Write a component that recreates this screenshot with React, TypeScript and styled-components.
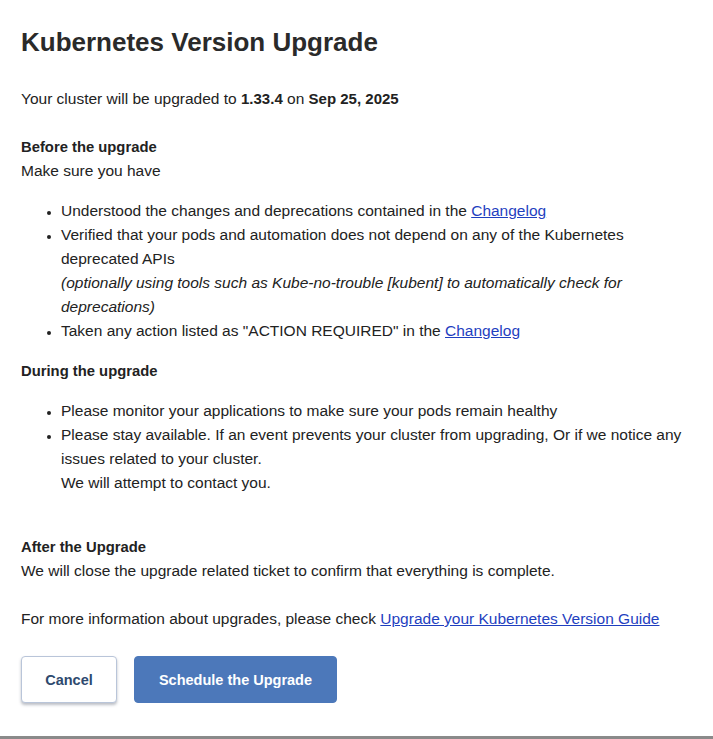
import React from 'react'
import styled, { createGlobalStyle } from 'styled-components'

const GlobalStyle = createGlobalStyle`
	html, body {
		margin: 0;
		padding: 0;
		background: #ffffff;
	}
	body {
		font-family: 'Liberation Sans', Arial, sans-serif;
		color: #222222;
	}
`

const App = () => {
	return (
		<>
			<GlobalStyle />
			<Page>
				<Title>Kubernetes Version Upgrade</Title>

				<Intro>
					Your cluster will be upgraded to <Strong>1.33.4</Strong> on <Strong>Sep 25, 2025</Strong>
				</Intro>

				<Section>
					<Heading>Before the upgrade</Heading>
					<Text>Make sure you have</Text>
					<List>
						<li>
							Understood the changes and deprecations contained in the <Link href="#">Changelog</Link>
						</li>
						<li>
							Verified that your pods and automation does not depend on any of the Kubernetes
							<br />
							deprecated APIs
							<br />
							<Note>
								(optionally using tools such as Kube-no-trouble [kubent] to automatically check for
								<br />
								deprecations)
							</Note>
						</li>
						<li>
							Taken any action listed as "ACTION REQUIRED" in the <Link href="#">Changelog</Link>
						</li>
					</List>
				</Section>

				<Section>
					<Heading>During the upgrade</Heading>
					<List>
						<li>Please monitor your applications to make sure your pods remain healthy</li>
						<li>
							Please stay available. If an event prevents your cluster from upgrading, Or if we notice any
							<br />
							issues related to your cluster.
							<br />
							We will attempt to contact you.
						</li>
					</List>
				</Section>

				<Section $top={40} $bottom={24}>
					<Heading>After the Upgrade</Heading>
					<Text>We will close the upgrade related ticket to confirm that everything is complete.</Text>
				</Section>

				<Text>
					For more information about upgrades, please check{' '}
					<Link href="#">Upgrade your Kubernetes Version Guide</Link>
				</Text>

				<Actions>
					<Button type="button">Cancel</Button>
					<Button type="button" $primary>
						Schedule the Upgrade
					</Button>
				</Actions>
			</Page>
			<BottomEdge />
		</>
	)
}

const Page = styled.div`
	box-sizing: border-box;
	width: 713px;
	height: 736px;
	padding: 25px 21px 0;
	font-size: 15.5px;
	line-height: 24px;
	color: #222222;
`

const Title = styled.h1`
	margin: 0 0 28px;
	font-size: 26px;
	line-height: 34px;
	font-weight: 700;
	color: #2a2a2a;
`

const Intro = styled.p`
	margin: 0 0 24px;
`

const Strong = styled.strong`
	font-weight: 700;
	font-size: 15px;
`

const Section = styled.div<{ $top?: number; $bottom?: number }>`
	margin: ${({ $top = 0, $bottom = 16 }) => `${$top}px 0 ${$bottom}px`};
`

const Heading = styled.div`
	font-weight: 700;
	font-size: 14.8px;
`

const Text = styled.p`
	margin: 0;
`

const List = styled.ul`
	margin: 16px 0;
	padding-left: 40px;
	list-style: disc;

	li::marker {
		font-size: 12px;
	}
`

const Note = styled.em`
	font-style: italic;
`

const Link = styled.a`
	color: #1f3fbf;
	text-decoration: underline;
`

const Actions = styled.div`
	display: flex;
	gap: 17px;
	margin-top: 25px;
`

const Button = styled.button<{ $primary?: boolean }>`
	box-sizing: border-box;
	height: 47px;
	padding: 0 16px;
	border-radius: 4px;
	font-family: 'Liberation Sans', Arial, sans-serif;
	font-size: 14.5px;
	font-weight: 700;
	cursor: pointer;
	border: 1px solid ${({ $primary }) => ($primary ? '#4c78ba' : '#b9c5d9')};
	background: ${({ $primary }) => ($primary ? '#4c78ba' : '#ffffff')};
	color: ${({ $primary }) => ($primary ? '#ffffff' : '#2e4a6e')};
	box-shadow: ${({ $primary }) => ($primary ? 'none' : '0 2px 3px rgba(60, 70, 90, 0.35)')};
	width: ${({ $primary }) => ($primary ? '203px' : '96px')};
`

const BottomEdge = styled.div`
	height: 3px;
	background: #8a8a8a;
`

export default App
